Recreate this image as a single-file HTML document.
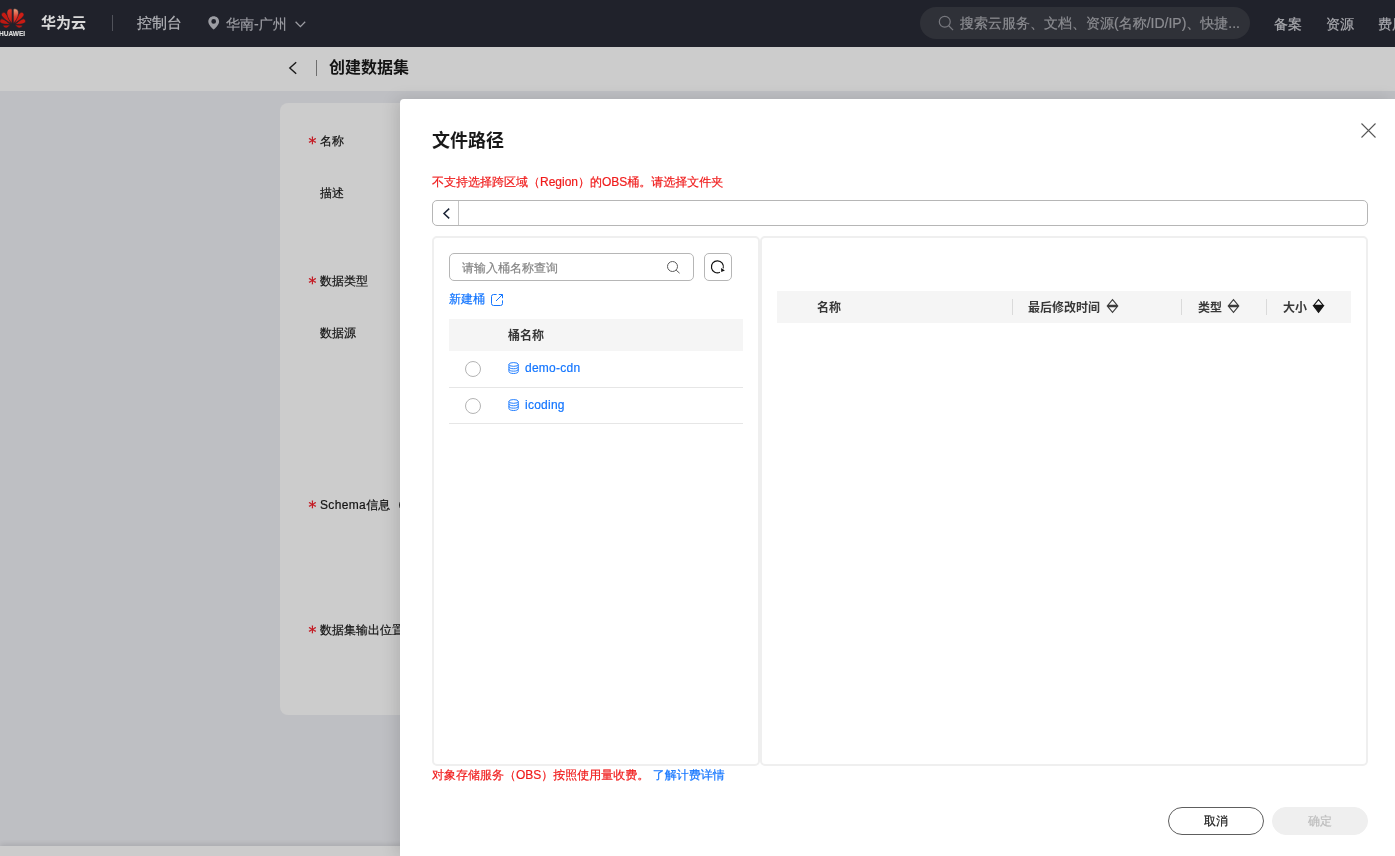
<!DOCTYPE html>
<html lang="zh-CN">
<head>
<meta charset="utf-8">
<title>创建数据集</title>
<style>
*{box-sizing:border-box;margin:0;padding:0}
html,body{width:1395px;height:856px;overflow:hidden}
body{position:relative;background:#bebfc3;font-family:"Liberation Sans","WenQuanYi Zen Hei",sans-serif;font-size:12px;color:#191919;-webkit-text-stroke:0.2px}
.b{-webkit-text-stroke:0;font-family:"Liberation Sans","Noto Sans CJK SC",sans-serif;font-weight:bold}
svg{position:absolute;overflow:visible}
#root{position:absolute;left:0;top:0;width:1395px;height:856px;will-change:transform}
/* header */
#hdr{position:absolute;left:0;top:0;width:1395px;height:47px;background:#20222b;color:#a9aaaf;overflow:hidden}
#hdr .t{position:absolute;white-space:nowrap}
#hw{left:-1px;top:29px;font-size:7.6px;line-height:9px;font-weight:bold;color:#dcdcdc;font-family:"Liberation Sans",sans-serif;transform:scaleX(0.86);transform-origin:0 0}
#brand{left:41px;top:12px;font-size:15px;line-height:22px;color:#dadada}
#hdiv{position:absolute;left:112px;top:15px;width:1px;height:16px;background:#50525a}
#console{left:137px;top:12px;font-size:15px;line-height:22px;color:#b2b3b8}
#region{left:226px;top:13px;font-size:14px;line-height:22px;color:#9c9da3}
#search{position:absolute;left:920px;top:7px;width:330px;height:32px;border-radius:16px;background:#2f3138}
#search .ph{position:absolute;left:40px;top:5px;font-size:14px;line-height:22px;color:#8b8c91;white-space:nowrap}
.hlink{font-size:14px;line-height:22px;top:13px;color:#a9aaaf}
/* sub bar */
#sub{position:absolute;left:0;top:47px;width:1395px;height:44px;background:#cccccc}
#sub .ttl{position:absolute;left:329px;top:10px;font-size:16px;line-height:22px;color:#141414;white-space:nowrap}
#sub .dv{position:absolute;left:316px;top:13px;width:1px;height:16px;background:#6e6e6e}
/* card */
#card{position:absolute;left:280px;top:103px;width:1115px;height:612px;background:#cccccc;border-radius:8px}
.lbl{position:absolute;left:320px;font-size:12px;line-height:16px;color:#141414;white-space:nowrap}
.star{position:absolute;left:307px;font-size:18px;line-height:16px;color:#c4131c;font-family:"WenQuanYi Zen Hei",sans-serif}
#foot{position:absolute;left:0;top:846px;width:1395px;height:10px;background:#cccccc;box-shadow:0 -2px 5px rgba(0,0,0,.10)}
/* drawer */
#drawer{position:absolute;left:400px;top:99px;width:995px;height:757px;background:#fff;border-top-left-radius:4px;box-shadow:-4px 0 16px rgba(0,0,0,.13)}
#drawer .h{position:absolute;left:32px;top:28px;font-size:18px;line-height:28px;color:#191919;white-space:nowrap}
.red{color:#f01c1c}
.blue{color:#1476ff}
#tip{position:absolute;left:32px;top:75px;font-size:12px;line-height:16px;white-space:nowrap}
#path{position:absolute;left:32px;top:101px;width:936px;height:26px;border:1px solid #b6b6b6;border-radius:5px;background:#fff}
#path .bk{position:absolute;left:0;top:0;width:26px;height:24px;border-right:1px solid #c6c6c6}
.panel{position:absolute;top:137px;height:530px;border:2px solid #efefef;border-radius:5px;background:#fff}
#pl{left:32px;width:328px}
#pr{left:360px;width:608px}
#q{position:absolute;left:49px;top:154px;width:245px;height:28px;border:1px solid #b6b6b6;border-radius:5px}
#q .ph{position:absolute;left:12px;top:6px;font-size:12px;line-height:16px;color:#858585;white-space:nowrap}
#rf{position:absolute;left:304px;top:154px;width:28px;height:28px;border:1px solid #b6b6b6;border-radius:5px}
#nb{position:absolute;left:49px;top:192px;font-size:12px;line-height:16px;white-space:nowrap}
.th{position:absolute;background:#f5f5f5;color:#383838}
.th span{position:absolute;white-space:nowrap;font-size:12px;line-height:16px}
.row{position:absolute;left:49px;width:294px;border-bottom:1px solid #e6e6e6}
.radio{position:absolute;left:16px;width:16px;height:16px;border:1px solid #b4b4b4;border-radius:50%;background:#fff}
.row .nm{position:absolute;left:76px;font-size:12px;line-height:16px;white-space:nowrap;letter-spacing:0.25px}
.cdv{position:absolute;top:8px;width:1px;height:16px;background:#dadada}
#fee{position:absolute;left:32px;top:668px;font-size:12px;line-height:16px;white-space:nowrap}
.btn{position:absolute;top:708px;width:96px;height:28px;border-radius:14px;font-size:12px;line-height:26px;text-align:center}
#cancel{left:768px;border:1px solid #5e5e5e;color:#191919;background:#fff}
#ok{left:872px;border:1px solid #efefef;background:#efefef;color:#bdbdbd}
</style>
</head>
<body>
<div id="root">

<!-- page behind mask -->
<div id="sub">
  <svg style="left:288px;top:14px" width="10" height="14" viewBox="0 0 10 14"><path d="M8.2 1.2 L1.8 7 L8.2 12.8" fill="none" stroke="#1a1a1a" stroke-width="1.4"/></svg>
  <div class="dv"></div>
  <div class="ttl b">创建数据集</div>
</div>
<div id="card"></div>
<div class="star" style="top:135px">*</div><div class="lbl" style="top:133px">名称</div>
<div class="lbl" style="top:185px">描述</div>
<div class="star" style="top:275px">*</div><div class="lbl" style="top:273px">数据类型</div>
<div class="lbl" style="top:325px">数据源</div>
<div class="star" style="top:499px">*</div><div class="lbl" style="top:497px"><span style="letter-spacing:0.35px">Schema</span>信息</div>
<div style="position:absolute;left:399px;top:498px;width:14px;height:14px;border:1px solid #2a2a2a;border-radius:50%"></div>
<div class="star" style="top:624px">*</div><div class="lbl" style="top:622px">数据集输出位置</div>
<div id="foot"></div>

<div id="hdr">
  <svg id="logo" style="left:0;top:0" width="28" height="32" viewBox="0 0 28 32">
    <defs>
      <linearGradient id="g1" x1="0" y1="0" x2="0" y2="1"><stop offset="0" stop-color="#d93a2b"/><stop offset="1" stop-color="#c01812"/></linearGradient>
      <linearGradient id="g2" x1="0" y1="0" x2="0" y2="1"><stop offset="0" stop-color="#e9a582"/><stop offset="0.55" stop-color="#de3a2c"/><stop offset="1" stop-color="#cf1d16"/></linearGradient>
      <path id="pt" d="M0 0 C-0.6 -3 -3.4 -8 -2.4 -12.6 C-1.9 -14.6 1.9 -14.6 2.4 -12.6 C3.4 -8 0.6 -3 0 0Z"/>
    </defs>
    <g transform="translate(12.7,23.4)" stroke="#20222b" stroke-width="0.6">
      <path d="M-2.6 1.5 L-10 1.9 C-9.5 3.6 -7.7 4.9 -6.2 4.6 C-4.8 4.2 -3.3 2.7 -2.6 1.5Z" fill="#b4150f"/>
      <path d="M2.6 1.5 L10 1.9 C9.5 3.6 7.7 4.9 6.2 4.6 C4.8 4.2 3.3 2.7 2.6 1.5Z" fill="#c01711"/>
      <path d="M0 0 C-0.54 -2.51 -2.90 -6.84 -2.15 -10.03 C-1.72 -11.74 1.72 -11.74 2.15 -10.03 C2.90 -6.84 0.54 -2.51 0 0Z" transform="translate(-2.2,1.2) rotate(-68)" fill="#bd1812"/>
      <path d="M0 0 C-0.54 -2.51 -2.90 -6.84 -2.15 -10.03 C-1.72 -11.74 1.72 -11.74 2.15 -10.03 C2.90 -6.84 0.54 -2.51 0 0Z" transform="translate(2.2,1.2) rotate(68)" fill="#c81b14"/>
      <path d="M0 0 C-0.56 -3.12 -3.04 -8.52 -2.25 -12.50 C-1.80 -14.63 1.80 -14.63 2.25 -12.50 C3.04 -8.52 0.56 -3.12 0 0Z" transform="translate(-1.5,0.5) rotate(-39)" fill="#c41a13"/>
      <path d="M0 0 C-0.56 -3.12 -3.04 -8.52 -2.25 -12.50 C-1.80 -14.63 1.80 -14.63 2.25 -12.50 C3.04 -8.52 0.56 -3.12 0 0Z" transform="translate(1.5,0.5) rotate(39)" fill="#cf1e16"/>
      <path d="M-0.6 0 L-0.6 -14.2 C-3.6 -15.4 -6 -13.4 -5.8 -10 C-5.5 -5.6 -2.6 -1.8 -0.6 0Z" fill="url(#g1)"/>
      <path d="M0.6 0 L0.6 -14.2 C3.6 -15.4 6 -13.4 5.8 -10 C5.5 -5.6 2.6 -1.8 0.6 0Z" fill="url(#g2)"/>
    </g>
  </svg>
  <div class="t" id="hw">HUAWEI</div>
  <div class="t b" id="brand">华为云</div>
  <div id="hdiv"></div>
  <div class="t" id="console">控制台</div>
  <svg style="left:208px;top:16px" width="11.4" height="14.2" viewBox="0 0 12 15"><path fill-rule="evenodd" d="M6 0.2 C2.8 0.2 0.3 2.6 0.3 5.7 C0.3 9.2 4.2 12.6 6 14.4 C7.8 12.6 11.7 9.2 11.7 5.7 C11.7 2.6 9.2 0.2 6 0.2Z M6 3.3 A2.5 2.5 0 1 0 6 8.3 A2.5 2.5 0 1 0 6 3.3Z" fill="#9c9da3"/></svg>
  <div class="t" id="region">华南-广州</div>
  <svg style="left:295px;top:21px" width="11" height="7" viewBox="0 0 11 7"><path d="M0.6 0.8 L5.4 5.6 L10.2 0.8" fill="none" stroke="#9c9da3" stroke-width="1.3"/></svg>
  <div id="search">
    <svg style="left:18px;top:7.5px" width="16" height="16" viewBox="0 0 17 17"><circle cx="7.2" cy="7.2" r="5.8" fill="none" stroke="#77787e" stroke-width="1.3"/><path d="M11.4 11.4 L16 16" stroke="#77787e" stroke-width="1.3" fill="none"/></svg>
    <div class="ph">搜索云服务、文档、资源(名称/ID/IP)、快捷...</div>
  </div>
  <div class="t hlink" style="left:1274px">备案</div>
  <div class="t hlink" style="left:1326px">资源</div>
  <div class="t hlink" style="left:1378px">费用</div>
</div>

<!-- drawer -->
<div id="drawer">
  <div class="h b">文件路径</div>
  <svg style="left:960.5px;top:24px" width="15" height="15" viewBox="0 0 15 15"><path d="M0.5 0.5 L14.5 14.5 M14.5 0.5 L0.5 14.5" stroke="#575757" stroke-width="1.1" fill="none"/></svg>
  <div id="tip" class="red">不支持选择跨区域（Region）的OBS桶。请选择文件夹</div>
  <div id="path"><div class="bk"></div>
    <svg style="left:10px;top:7px" width="7" height="11" viewBox="0 0 7 11"><path d="M6.2 0.6 L1 5.5 L6.2 10.4" fill="none" stroke="#1b2436" stroke-width="1.5"/></svg>
  </div>
  <div class="panel" id="pl"></div>
  <div class="panel" id="pr"></div>
  <div id="q"><div class="ph">请输入桶名称查询</div>
    <svg style="left:217px;top:7px" width="14" height="14" viewBox="0 0 14 14"><circle cx="5.5" cy="5.5" r="5" fill="none" stroke="#5a5a5a" stroke-width="1"/><path d="M9.2 9.2 L12.6 12.2" stroke="#5a5a5a" stroke-width="1" fill="none"/></svg>
  </div>
  <div id="rf">
    <svg style="left:0;top:0" width="26" height="26" viewBox="0 0 26 26"><path d="M18.2 14.35 A6 6 0 1 0 14.94 18.24" fill="none" stroke="#111" stroke-width="1.15"/><path d="M16.1 14.1 L19.9 16.6 L16.2 18Z" fill="#111"/></svg>
  </div>
  <div id="nb" class="blue">新建桶</div>
  <svg style="left:91px;top:194.5px" width="12" height="12" viewBox="0 0 12 12"><path d="M5.6 0.5 H2.5 A2 2 0 0 0 0.5 2.5 V9.5 A2 2 0 0 0 2.5 11.5 H9.5 A2 2 0 0 0 11.5 9.5 V6.4" fill="none" stroke="#1476ff" stroke-width="1"/><path d="M5 7 L11.3 0.7 M7.8 0.5 H11.5 V4.2" fill="none" stroke="#1476ff" stroke-width="1"/></svg>
  <div class="th" style="left:49px;top:220px;width:294px;height:32px"><span class="b" style="left:59px;top:9px">桶名称</span></div>
  <div class="row" style="top:252px;height:37px"><div class="radio" style="top:10px"></div>
    <svg class="bk1" style="left:59.3px;top:10.5px" width="11.2" height="12.2" viewBox="0 0 12 13"><g fill="none" stroke="#1476ff" stroke-width="1"><ellipse cx="6" cy="2.6" rx="5" ry="2"/><path d="M1 2.6 V10.2 C1 11.4 3.2 12.3 6 12.3 C8.8 12.3 11 11.4 11 10.2 V2.6"/><path d="M1 5.2 C1 6.4 3.2 7.2 6 7.2 C8.8 7.2 11 6.4 11 5.2"/><path d="M1 7.8 C1 9 3.2 9.8 6 9.8 C8.8 9.8 11 9 11 7.8"/></g></svg>
    <div class="nm blue" style="top:9px">demo-cdn</div></div>
  <div class="row" style="top:289px;height:36px"><div class="radio" style="top:10px"></div>
    <svg class="bk1" style="left:59.3px;top:10.5px" width="11.2" height="12.2" viewBox="0 0 12 13"><g fill="none" stroke="#1476ff" stroke-width="1"><ellipse cx="6" cy="2.6" rx="5" ry="2"/><path d="M1 2.6 V10.2 C1 11.4 3.2 12.3 6 12.3 C8.8 12.3 11 11.4 11 10.2 V2.6"/><path d="M1 5.2 C1 6.4 3.2 7.2 6 7.2 C8.8 7.2 11 6.4 11 5.2"/><path d="M1 7.8 C1 9 3.2 9.8 6 9.8 C8.8 9.8 11 9 11 7.8"/></g></svg>
    <div class="nm blue" style="top:9px">icoding</div></div>
  <div class="th" style="left:377px;top:192px;width:574px;height:32px">
    <span class="b" style="left:40px;top:9px">名称</span>
    <div class="cdv" style="left:235px"></div>
    <span class="b" style="left:251px;top:9px">最后修改时间</span>
    <svg style="left:330px;top:8px" width="11" height="14" viewBox="0 0 11 14"><g fill="none" stroke="#3c3c3c" stroke-width="1.1" stroke-linejoin="miter"><path d="M5.5 0.7 L10.3 6.4 H0.7Z"/><path d="M5.5 13.3 L10.3 7.6 H0.7Z"/></g></svg>
    <div class="cdv" style="left:404px"></div>
    <span class="b" style="left:421px;top:9px">类型</span>
    <svg style="left:451px;top:8px" width="11" height="14" viewBox="0 0 11 14"><g fill="none" stroke="#3c3c3c" stroke-width="1.1" stroke-linejoin="miter"><path d="M5.5 0.7 L10.3 6.4 H0.7Z"/><path d="M5.5 13.3 L10.3 7.6 H0.7Z"/></g></svg>
    <div class="cdv" style="left:489px"></div>
    <span class="b" style="left:506px;top:9px">大小</span>
    <svg style="left:536px;top:8px" width="11" height="14" viewBox="0 0 11 14"><g stroke="#151515" stroke-width="1.1"><path d="M5.5 0.7 L10.3 6.4 H0.7Z" fill="none"/><path d="M5.5 13.3 L10.3 7 H0.7Z" fill="#151515"/></g></svg>
  </div>
  <div id="fee"><span class="red">对象存储服务（OBS）按照使用量收费。</span> <span class="blue">了解计费详情</span></div>
  <div class="btn" id="cancel">取消</div>
  <div class="btn" id="ok">确定</div>
</div>
</div>
</body>
</html>
